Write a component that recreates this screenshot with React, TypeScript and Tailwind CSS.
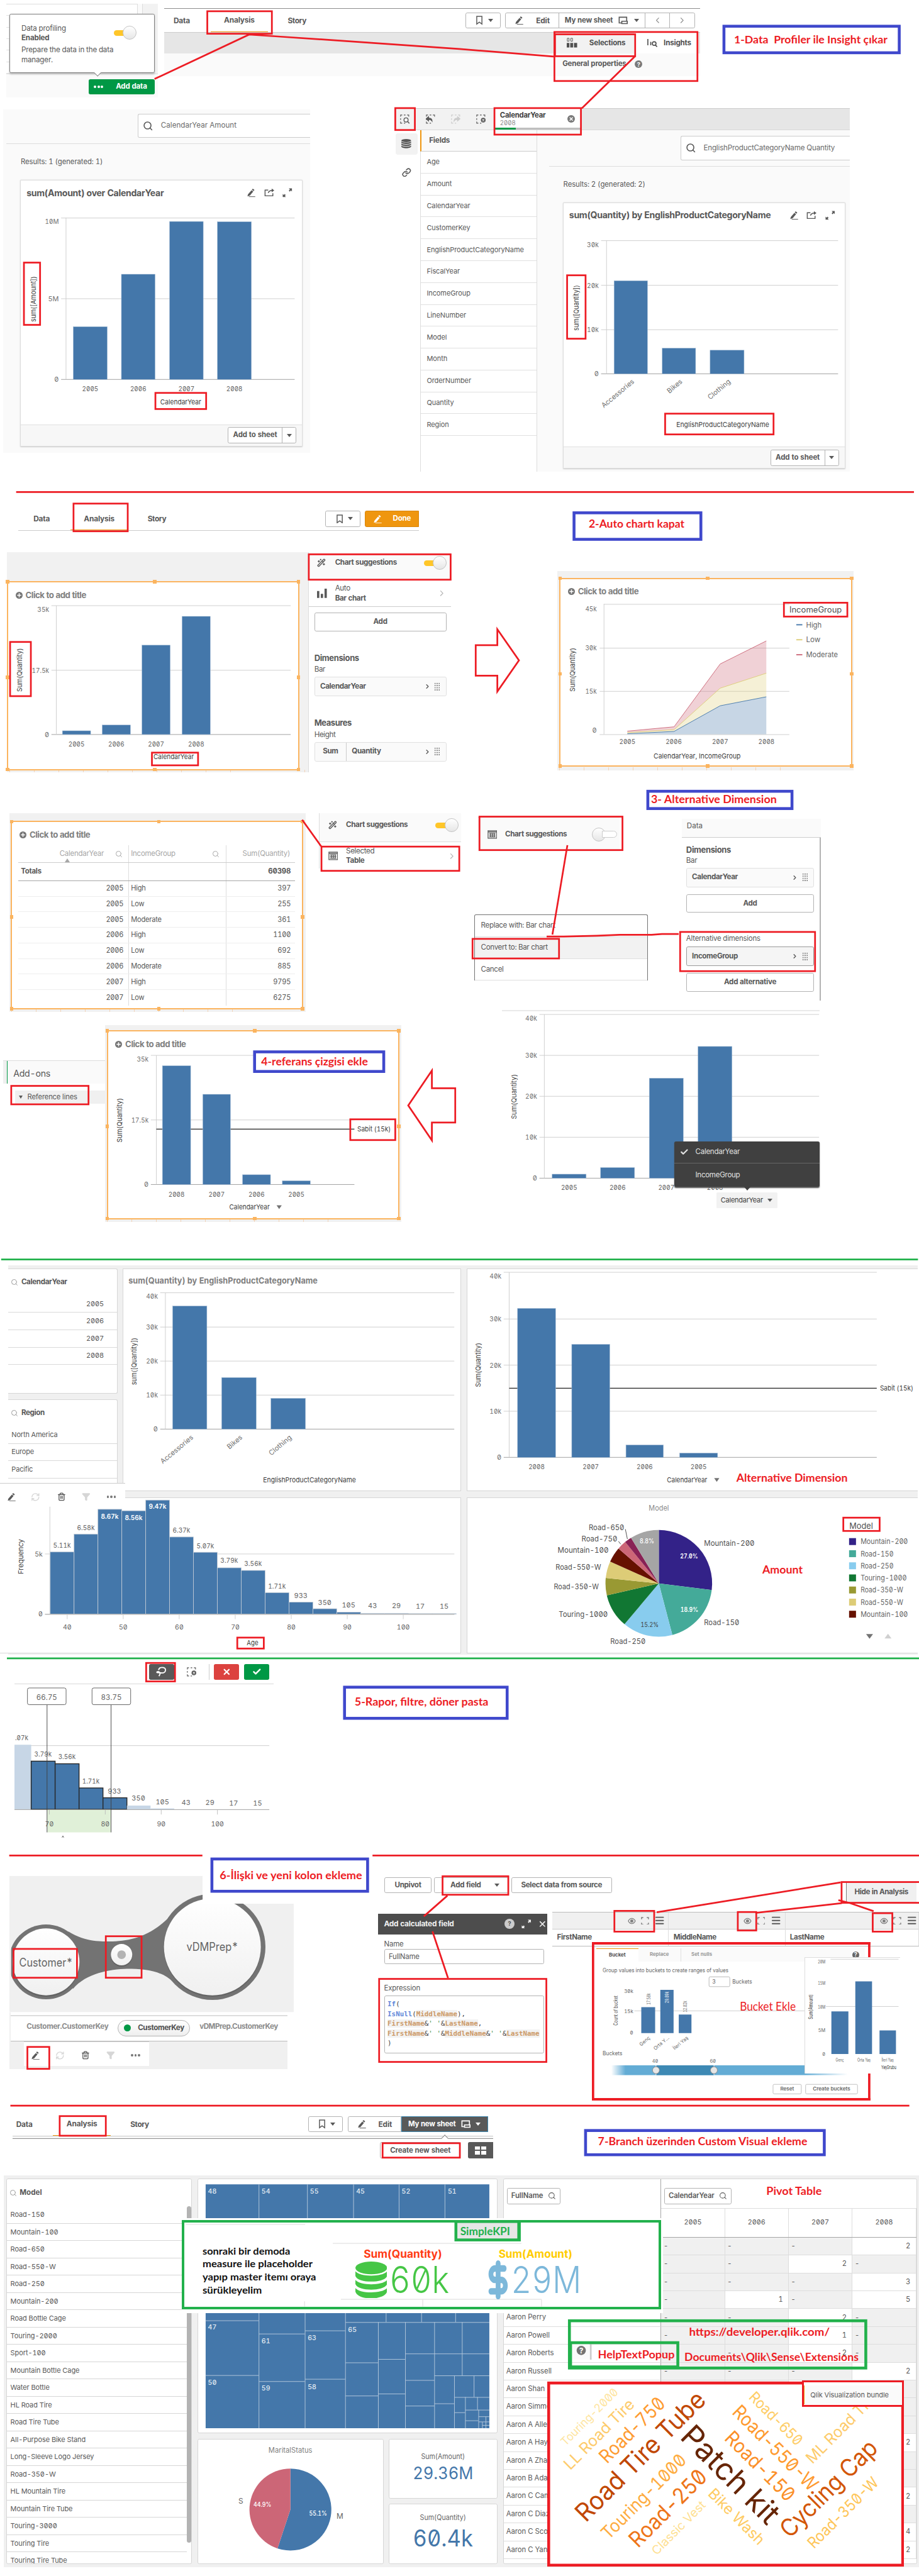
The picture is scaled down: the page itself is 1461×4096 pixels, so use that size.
import React from "react";
import { Search, ChevronLeft, ChevronRight, X, Check, RefreshCw, Trash2, Menu, Link, Wand2, Filter, DollarSign } from "lucide-react";

const BLUE = "#4477aa";
const RED = "#ed1c24";

type Kids = { children?: React.ReactNode };

/* ---------- svg primitives ---------- */

type TxtProps = {
  x: number;
  y: number;
  s?: number;
  w?: number;
  a?: "start" | "middle" | "end";
  f?: string;
  b?: number;
  r?: number;
  children?: React.ReactNode;
};

function Txt({ x, y, s = 11.5, w, a = "middle", f = "#656565", b = 400, r, children }: TxtProps) {
  return (
    <text
      x={x}
      y={y}
      dy=".36em"
      fontSize={s}
      fontWeight={b}
      fill={f}
      textAnchor={a}
      textLength={w}
      lengthAdjust="spacingAndGlyphs"
      transform={r ? `rotate(${r} ${x} ${y})` : undefined}
    >
      {children}
    </text>
  );
}

function Note({ x0, x1, y, s = 19, f = RED, b = 700, children }: { x0: number; x1: number; y: number; s?: number; f?: string; b?: number } & Kids) {
  return (
    <text x={x0} y={y} fontSize={s} fontWeight={b} fill={f} textLength={x1 - x0} lengthAdjust="spacingAndGlyphs" fontFamily="Lato, sans-serif">
      {children}
    </text>
  );
}

function Frame({ b, c = RED, t = 3, fill = "none" }: { b: [number, number, number, number]; c?: string; t?: number; fill?: string }) {
  return <rect x={b[0] + t / 2} y={b[1] + t / 2} width={b[2] - b[0] - t} height={b[3] - b[1] - t} fill={fill} stroke={c} strokeWidth={t} />;
}

function Plot({ box, className = "", children }: { box: [number, number, number, number]; className?: string } & Kids) {
  return (
    <svg className={`block shrink-0 ${className}`} width={box[2]} height={box[3]} viewBox={box.join(" ")}>
      {children}
    </svg>
  );
}

const AXIS_WIDTH: Record<string, number> = { "17.5k": 30, "10M": 24 };

type Bars = {
  gx: [number, number];
  axis: number;
  grid: [number, string, number?][];
  bars: [number, number, number][];
  cats?: string[];
  catY?: number;
  tilt?: boolean;
  refLine?: { y: number; x: number; w: number };
  yt?: [number, number, number, string];
  xt?: [number, number, number, string];
};

function BarPlot({ gx, axis, grid, bars, cats = [], catY = 0, tilt, refLine, yt, xt }: Bars) {
  const base = grid[grid.length - 1][0];
  return (
    <g>
      {grid.map(([y, label, ly], i) => (
        <g key={i}>
          <line x1={gx[0]} x2={gx[1]} y1={y} y2={y} stroke={i === grid.length - 1 ? "#999" : "#ccc"} />
          <Txt x={gx[0] - 4} y={ly ?? y} a="end" s={12} w={AXIS_WIDTH[label] ?? (label.length === 3 ? 20.5 : undefined)} f="#737373">{label}</Txt>
        </g>
      ))}
      <line x1={axis} x2={axis} y1={grid[0][0]} y2={base} stroke="#ccc" />
      {refLine && <line x1={axis} x2={gx[1]} y1={refLine.y} y2={refLine.y} stroke="#222" strokeWidth={1.3} />}
      {refLine && <Txt x={refLine.x} y={refLine.y} a="start" s={12} w={refLine.w} f="#404040">Sabit (15k)</Txt>}
      {bars.map(([a, b, top], i) => (
        <g key={i}>
          <rect x={a} y={top} width={b - a} height={base - top} fill={BLUE} stroke="#a9c0d8" strokeWidth={0.6} />
          {cats[i] && !tilt && <Txt x={(a + b) / 2} y={catY} s={12} w={28} f="#666">{cats[i]}</Txt>}
          {cats[i] && tilt && <Txt x={(a + b) / 2 + 4} y={catY} a="end" s={12} r={-40} f="#737373">{cats[i]}</Txt>}
        </g>
      ))}
      {yt && <Txt x={yt[0]} y={yt[1]} w={yt[2]} r={-90} s={12} f="#404040">{yt[3]}</Txt>}
      {xt && <Txt x={xt[0]} y={xt[1]} w={xt[2]} s={12} f="#404040">{xt[3]}</Txt>}
    </g>
  );
}

function slice(cx: number, cy: number, r: number, a0: number, a1: number) {
  const p = (a: number) => `${cx + r * Math.sin((a * Math.PI) / 180)} ${cy - r * Math.cos((a * Math.PI) / 180)}`;
  return `M${cx} ${cy}L${p(a0)}A${r} ${r} 0 ${a1 - a0 > 180 ? 1 : 0} 1 ${p(a1)}Z`;
}

/* ---------- icons ---------- */

function PencilIcon({ className = "size-4" }: { className?: string }) {
  return (
    <svg viewBox="0 0 16 16" className={className} fill="currentColor">
      <path d="M10.7 1.2l3 2.2-1.5 1.9-3-2.3zM8.6 3.8l3 2.2-5.9 7.2-4.2 1.4.9-3.7z" />
      <path d="M4 14.4h11v1.1H4z" />
    </svg>
  );
}
function BookmarkIcon() {
  return (
    <svg viewBox="0 0 11 16" className="h-4 w-[11px]" fill="none" stroke="currentColor" strokeWidth="1.6">
      <path d="M1 1h9v13.5l-4.500-3.500L1 14.500z" />
    </svg>
  );
}
function ShareIcon() {
  return (
    <svg viewBox="0 0 18 16" className="h-4 w-[18px]" fill="none" stroke="currentColor" strokeWidth="1.6">
      <path d="M7 3.5H1.5v10h13.500V9M7 8.500c1-3.500 3.500-4.500 7-4.500" />
      <path d="M13 .8L17.500 4 13 7.300z" fill="currentColor" stroke="none" />
    </svg>
  );
}
function ExpandIcon() {
  return (
    <svg viewBox="0 0 17 16" className="h-4 w-[17px]" fill="currentColor">
      <path d="M11 .5h5.500v5.500l-1.800-1.800-2 2-1.700-1.700 2-2zM.5 15.500h5.500l-1.800-1.800 1.500-1.500-1.700-1.700-1.600 1.600L.5 10.300z" />
    </svg>
  );
}
function SheetIcon() {
  return (
    <svg viewBox="0 0 17 14" className="h-[14px] w-[17px]" fill="none" stroke="currentColor" strokeWidth="1.800">
      <path d="M5.500 11.500H1.500V1.500h13v6.500" />
      <path d="M6 12.500v-4h9.500v4z" />
    </svg>
  );
}
function Caret({ className = "border-t-[#595959]" }: { className?: string }) {
  return <i className={`block h-0 w-0 border-x-[5px] border-t-[6px] border-x-transparent ${className}`} />;
}
function Help({ className = "size-[13px] bg-[#7a7a7a] text-white" }: { className?: string }) {
  return <i className={`flex items-center justify-center rounded-full text-[10px] font-bold not-italic leading-none ${className}`}>?</i>;
}
function Dashed({ kind, className = "" }: { kind: "find" | "back" | "next" | "clear"; className?: string }) {
  return (
    <svg viewBox="0 0 18 18" className={`size-[17px] ${className}`} fill="none" stroke="currentColor" strokeWidth="1.300">
      <path d="M1 4V1h3M7 1h3M13 1h3v3M1 7v3M1 13v3h3M7 16h2.500" />
      {kind === "find" && <><circle cx="11" cy="10" r="3.800" strokeWidth="1.600" /><path d="M14 13l3 3.500" strokeWidth="1.800" /></>}
      {kind === "back" && <path d="M5 4L.5 8 5 12V9.300c4 0 5 .7 6.500 3.200 0-4-2-5.800-6.500-6z" fill="currentColor" />}
      {kind === "next" && <path d="M12 4l4.500 4-4.500 4V9.300c-4 0-5 .7-6.500 3.200 0-4 2-5.800 6.500-6z" fill="currentColor" />}
      {kind === "clear" && <><circle cx="13" cy="10.500" r="4.300" fill="currentColor" stroke="none" /><path d="M11.300 8.800l3.400 3.400m0-3.400l-3.400 3.400" stroke="#fff" /></>}
    </svg>
  );
}
function LassoIcon() {
  return (
    <svg viewBox="0 0 18 18" className="size-[18px]" fill="none" stroke="#fff" strokeWidth="2">
      <path d="M4.500 6C5 3 7.500 1.500 10.500 1.500c3.500 0 6 1.800 6 4.500s-2.500 5-6 5c-3 0-5.500-1-8-.5-1.500.3-1.500-2 1-2 2.500.2 3.500 1.500 3.500 3.500 0 1.800-.8 3-2 4.500" />
    </svg>
  );
}
function Database({ className = "" }: { className?: string }) {
  return (
    <svg viewBox="0 0 54 64" preserveAspectRatio="none" className={className} fill="currentColor">
      <ellipse cx="27" cy="11" rx="27" ry="11" />
      <path d="M0 17c8 10 46 10 54 0v8c-4 13-50 13-54 0zM0 32c8 10 46 10 54 0v7c-4 13-50 13-54 0zM0 46c8 10 46 10 54 0v6c-4 16-50 16-54 0z" />
    </svg>
  );
}
function Toggle({ off }: { off?: boolean }) {
  const knob = "size-6 shrink-0 rounded-full border border-[#c4c4c4] bg-gradient-to-b from-white to-[#e6e6e6]";
  return off ? (
    <div className="flex items-center">
      <div className={knob} />
      <div className="-ml-1.5 h-3 w-[26px] rounded-r-full border border-[#ccc] bg-white" />
    </div>
  ) : (
    <div className="flex items-center">
      <div className="-mr-3 h-[10px] w-7 rounded-full bg-[#ffc629]" />
      <div className={knob} />
    </div>
  );
}
function GridDots() {
  return <i className="block h-[15px] w-[11px] bg-[radial-gradient(circle,#777_0.9px,transparent_1.2px)] bg-[length:3.6px_3.75px]" />;
}
function TableIcon() {
  return (
    <svg viewBox="0 0 17 15" className="h-[15px] w-[17px]" fill="none" stroke="#595959" strokeWidth="1.400">
      <path d="M1 1h15v13H1zM1 3h15M5 5v7M8.500 5v7M12 5v7M3 5.500h11M3 8.500h11M3 11.500h11" />
    </svg>
  );
}
function BarsIcon() {
  return (
    <svg viewBox="0 0 17 16" className="h-4 w-[17px]" fill="#595959">
      <path d="M0 4h4v12H0zM6.500 9h4v7h-4zM13 0h4v16h-4z" />
    </svg>
  );
}

/* ---------- shared interface pieces ---------- */

const btn = "flex items-center justify-center border border-[#b3b3b3] bg-white";

function Tabs({ className = "", children }: { className?: string } & Kids) {
  return (
    <div className={`flex text-[13px] font-bold tracking-[-0.2px] text-[#595959] ${className}`}>
      <div className="flex w-16 items-center">Data</div>
      <div className="flex w-[100px] items-center justify-center border-b-2 border-[#ef960f]">Analysis</div>
      <div className="flex items-center pl-[34px] tracking-[-0.4px]">Story</div>
      <div className="ml-auto flex items-center text-[13px]">{children}</div>
    </div>
  );
}

function BookmarkButton() {
  return (
    <div className={`${btn} mr-2 h-7 w-[61px] gap-[9px] rounded-[3px] pl-[6px]`}>
      <BookmarkIcon />
      <Caret />
    </div>
  );
}

function AddToSheet() {
  return (
    <div className="flex h-[37px] items-center justify-end border-t border-[#e0e0e0] bg-[#f7f7f7] pr-[10px]">
      <div className="flex h-7 w-[119px] rounded-[3px] border border-[#b3b3b3] bg-white">
        <div className="flex flex-1 items-center justify-center text-[12.5px] font-bold tracking-[-0.1px]">Add to sheet</div>
        <div className="flex w-6 items-center justify-center border-l border-[#b3b3b3]"><Caret /></div>
      </div>
    </div>
  );
}

function SearchBox({ className, children }: { className: string } & Kids) {
  return (
    <div className={`ml-auto flex h-[42px] shrink-0 items-center rounded-l-[3px] border border-r-0 border-[#ccc] bg-white pl-2 text-[12.7px] text-[#6b6b6b] ${className}`}>
      <Search className="mr-[13px] size-[18px] text-[#595959]" strokeWidth={2.3} />
      {children}
    </div>
  );
}

function InsightCard({ title, className, children }: { title: string; className: string } & Kids) {
  return (
    <div className={`flex h-[462px] w-[490px] flex-col rounded-[2px] border border-[#ddd] bg-white shadow-[0_1px_2px_#ccc] ${className}`}>
      <div className="flex h-[43px] shrink-0 items-center pl-[10px] pr-[17px]">
        <span className="text-[15.4px] font-bold tracking-[-0.35px]">{title}</span>
        <span className="ml-auto flex gap-[14px] text-[#595959]"><PencilIcon /><ShareIcon /><ExpandIcon /></span>
      </div>
      {children}
      <AddToSheet />
    </div>
  );
}

/** A chart object selected in edit mode: grid backdrop, orange outline and eight drag handles. */
function Selected({ className, inner, children }: { className: string; inner: string } & Kids) {
  const h = "absolute size-[6px] bg-[#fbb45f]";
  return (
    <div className={`absolute bg-[#f1f1f1] ${className}`}>
      <div className="absolute inset-x-1 bottom-0 h-[5px] bg-[repeating-linear-gradient(90deg,#f3d3b6_0_1px,transparent_1px_42.6px)]" />
      <div className={`absolute border-[2.5px] border-[#fbb45f] bg-white ${inner}`}>
        <div className="flex h-11 items-center gap-[5px] pl-[13px] text-[14.5px] font-bold tracking-[-0.55px] text-[#808080]">
          <svg viewBox="0 0 12 12" className="size-3"><circle cx="6" cy="6" r="6" fill="#757575" /><path d="M6 2.500v7M2.500 6h7" stroke="#fff" strokeWidth="1.600" /></svg>
          Click to add title
        </div>
        {children}
        <i className={`${h} -left-1 -top-1`} /><i className={`${h} -right-1 -top-1`} /><i className={`${h} left-1/2 -top-1`} />
        <i className={`${h} -bottom-1 -left-1`} /><i className={`${h} -bottom-1 -right-1`} /><i className={`${h} -bottom-1 left-1/2`} />
        <i className={`${h} -left-1 top-1/2`} /><i className={`${h} -right-1 top-1/2`} />
      </div>
    </div>
  );
}

function Suggest({ icon, off, className = "" }: { icon: React.ReactNode; off?: boolean; className?: string }) {
  return (
    <div className={`flex items-center bg-[#fafafa] text-[12.7px] font-bold tracking-[-0.45px] ${className}`}>
      <span className="w-[31px]">{icon}</span>
      Chart suggestions
      <span className="ml-auto"><Toggle off={off} /></span>
    </div>
  );
}

function Chip({ label, pre, className = "border-[#e0e0e0] bg-[#fafafa]" }: { label: string; pre?: string; className?: string }) {
  return (
    <div className={`flex h-[34px] items-center rounded-[3px] border pr-[9px] text-[12.7px] font-bold tracking-[-0.4px] ${className}`}>
      {pre && <span className="flex h-full w-[55px] items-center justify-center border-r border-[#ccc]">{pre}</span>}
      <span className="pl-[9px]">{label}</span>
      <ChevronRight className="ml-auto mr-[6px] size-3" strokeWidth={3} />
      <GridDots />
    </div>
  );
}

function WideButton({ children }: Kids) {
  return <div className={`${btn} h-8 rounded-[3px] text-[12.7px] font-bold tracking-[-0.3px]`}>{children}</div>;
}

function ObjectTools() {
  return (
    <div className="flex h-[46px] items-center text-[#595959]">
      <PencilIcon className="mr-[26px] size-4" />
      <RefreshCw className="mr-[29px] size-4 text-[#d6d6d6]" strokeWidth={2.2} />
      <Trash2 className="mr-[28px] size-[15px]" strokeWidth={2.4} />
      <Filter className="mr-[28px] size-[15px] text-[#d6d6d6]" fill="currentColor" />
      <span className="flex gap-[2px]"><i className="size-1 rounded-full bg-[#777]" /><i className="size-1 rounded-full bg-[#777]" /><i className="size-1 rounded-full bg-[#777]" /></span>
    </div>
  );
}

/* ---------- 1: data profiler and insights ---------- */

const FIELDS = ["Age", "Amount", "CalendarYear", "CustomerKey", "EnglishProductCategoryName", "FiscalYear", "IncomeGroup", "LineNumber", "Model", "Month", "OrderNumber", "Quantity", "Region"];

function Profiler() {
  return (
    <section>
      <div className="absolute left-[11px] top-[7px] h-[162px] w-[263px] bg-[#fafafa]">
        <div className="flex h-[122px] justify-between border-b border-[#ddd]">
          <div className="w-[228px] border-r border-t border-[#ddd] bg-[repeating-linear-gradient(0deg,#e3e3e3_0_1px,#fff_1px_20px)]" />
          <div className="w-[27px] border-l border-[#ddd] bg-[#f2f2f2]" />
        </div>
        <div className="absolute left-[5px] top-[17px] flex h-[103px] w-[252px] rounded-[3px] border border-[#808080] bg-white pl-5 pt-4 shadow-[0_2px_3px_#bbb]">
          <div className="w-[160px] text-[12.7px] leading-[17px] tracking-[-0.2px]">
            <p>Data profiling</p>
            <p className="mb-1 font-bold">Enabled</p>
            <p className="whitespace-nowrap">Prepare the data in the data</p>
            <p>manager.</p>
          </div>
          <div className="pt-1"><Toggle /></div>
        </div>
        <i className="absolute left-[154px] top-[115px] size-[9px] rotate-45 border-b border-r border-[#808080] bg-white" />
        <div className="absolute left-[143px] top-[130px] flex h-[27px] w-[114px] items-center gap-[22px] rounded-[3px] bg-[#009845] pl-[9px] text-[12.6px] font-bold tracking-[-0.2px] text-white">
          <span className="flex gap-[2px]"><i className="size-1 rounded-full bg-white" /><i className="size-1 rounded-full bg-white" /><i className="size-1 rounded-full bg-white" /></span>
          Add data
        </div>
      </div>

      <div className="absolute left-[285px] top-[14px] flex h-[118px] w-[929px] flex-col bg-[#fafafa]">
        <Tabs className="h-[43px] border-b border-t border-b-[#ccc] border-t-[#8c8c8c] bg-white pl-4 pr-[9px]">
          <BookmarkButton />
          <div className={`${btn} h-7 w-[94px] gap-[21px] rounded-l-[3px]`}><PencilIcon />Edit</div>
          <div className={`${btn} -ml-px h-7 w-[150px] gap-[10px] text-[12.5px]`}>My new sheet<SheetIcon /><Caret /></div>
          <div className={`${btn} -ml-px h-7 w-11`}><ChevronLeft className="size-4 text-[#8c8c8c]" /></div>
          <div className={`${btn} -ml-px h-7 w-11 rounded-r-[3px]`}><ChevronRight className="size-4 text-[#8c8c8c]" /></div>
        </Tabs>
        <div className="flex h-[36px] justify-end bg-[#e6e6e6] pr-[3px] text-[12.6px] font-bold tracking-[-0.2px] text-[#505050]">
          <div className="flex w-[136px] items-center bg-[#f2f2f2] pl-[19px]">
            <svg viewBox="0 0 18 18" className="mr-[21px] size-[18px]" fill="#505050"><path d="M1 1h3v5H1zM7 1h3v5H7z" fill="none" stroke="#505050" /><path d="M0 9h4.500v8H0zM6 9h5v8H6zM12.500 9H18v8h-5.500z" /></svg>
            Selections
          </div>
          <div className="flex w-[111px] items-center gap-[11px] bg-white pl-[22px]">
            <svg viewBox="0 0 18 14" className="h-[14px] w-[18px]" fill="none" stroke="#505050" strokeWidth="1.800"><path d="M1 0v11M6 5v6" /><circle cx="12" cy="8" r="3.200" /><path d="M14 10.500l3 3" /></svg>
            Insights
          </div>
        </div>
        <div className="flex flex-1 items-center justify-end gap-[15px] pb-0.5 pr-[100px] text-[12.5px] font-bold tracking-[-0.2px]">General properties<Help /></div>
      </div>

      <div className="absolute left-[5px] top-[190px] flex h-[595px] w-[533px] flex-col bg-[#fafafa]">
        <div className="ml-[6px] flex h-[60px] border-b border-[#ddd] pt-[7px]"><SearchBox className="w-[299px]">CalendarYear Amount</SearchBox></div>
        <p className="flex h-[62px] items-center pl-[31px] text-[12.4px] tracking-[-0.1px]">Results: 1 (generated: 1)</p>
        <InsightCard title="sum(Amount) over CalendarYear" className="ml-[30px]">
          <Plot box={[36, 355, 488, 380]}>
            <BarPlot gx={[106, 511]} axis={114.5} grid={[[377.5, "10M", 383.5], [517.5, "5M"], [657.5, "0"]]} bars={[[127, 186, 566], [210.5, 269, 475], [294, 352.5, 383.5], [377, 436, 384]]} cats={["2005", "2006", "2007", "2008"]} catY={674} yt={[57.5, 518, 79, "sum([Amount])"]} xt={[313.5, 696, 71, "CalendarYear"]} />
          </Plot>
        </InsightCard>
      </div>

      <div className="absolute left-[686px] top-[188px] flex h-[630px] w-[788px] flex-col">
        <div className="flex h-[38px] items-center border-y border-b-[#d9d9d9] border-t-[#ccc] bg-[#e6e6e6]">
          <div className="flex h-full w-[172px] items-center gap-[27px] bg-[#f2f2f2] pl-2">
            <Dashed kind="find" /><Dashed kind="back" /><Dashed kind="next" className="text-[#ccc]" /><Dashed kind="clear" />
          </div>
          <div className="flex h-full w-[150px] flex-col justify-between bg-white">
            <div className="flex items-center justify-between pl-[9px] pr-[11px] pt-[5px]">
              <div><p className="text-[12.3px] font-bold leading-[13px] tracking-[-0.2px] text-[#404040]">CalendarYear</p><p className="text-[10.5px] leading-3 text-[#8c8c8c]">2008</p></div>
              <i className="flex size-[13px] items-center justify-center rounded-full bg-[#7a7a7a]"><X className="size-[9px] text-white" strokeWidth={4} /></i>
            </div>
            <div className="flex h-1 bg-[#bfbfbf]"><i className="w-[36px] bg-[#009845]" /></div>
          </div>
        </div>
        <div className="flex flex-1">
          <div className="flex w-[43px] flex-col items-center gap-[23px] pr-[5px] pt-[5px]">
            <div className="flex h-[37px] w-[38px] items-center justify-center rounded bg-[#f2f2f2]"><Database className="h-4 w-[17px]" /></div>
            <Link className="size-4" strokeWidth={2.6} />
          </div>
          <div className="flex w-[203px] flex-col border-r border-[#ddd]">
            <div className="flex h-[37px] items-center border-b border-l-[3px] border-b-[#ccc] border-l-[#ef960f] bg-[#fafafa] pl-[13px] text-[12.8px] font-bold tracking-[-0.2px]">Fields</div>
            <div className="flex-1 border-l border-[#ddd]">
              {FIELDS.map((f) => <div key={f} className="flex h-[37.95px] items-center border-b border-[#e0e0e0] pl-[10px] text-[12px] tracking-[-0.1px]">{f}</div>)}
            </div>
          </div>
          <div className="flex flex-1 flex-col bg-[#fafafa]">
            <div className="ml-5 flex h-[63px] border-b border-[#ddd] pt-[10px]"><SearchBox className="w-[294px] tracking-[-0.2px]">EnglishProductCategoryName Quantity</SearchBox></div>
            <p className="flex h-[62px] items-center pl-[45px] text-[12.4px] tracking-[-0.1px]">Results: 2 (generated: 2)</p>
            <InsightCard title="sum(Quantity) by EnglishProductCategoryName" className="ml-[44px]">
              <Plot box={[977, 394, 488, 380]}>
                <BarPlot gx={[1042, 1453]} axis={1051.5} grid={[[416.5, "30k", 423], [494, "20k"], [571, "10k"], [647.5, "0"]]} bars={[[1064.5, 1122.5, 486], [1148, 1206, 603], [1231, 1290, 606.5]]} cats={["Accessories", "Bikes", "Clothing"]} catY={659} tilt yt={[998.5, 533, 79, "sum([Quantity])"]} xt={[1253, 735, 161, "EnglishProductCategoryName"]} />
              </Plot>
            </InsightCard>
          </div>
        </div>
      </div>
    </section>
  );
}

/* ---------- 2 to 4: chart suggestions, alternative dimensions, reference line ---------- */

const ROWS: [string, string, string][] = [["2005", "High", "397"], ["2005", "Low", "255"], ["2005", "Moderate", "361"], ["2006", "High", "1100"], ["2006", "Low", "692"], ["2006", "Moderate", "885"], ["2007", "High", "9795"], ["2007", "Low", "6275"]];

function Suggestions() {
  return (
    <section>
      <Tabs className="absolute left-8 top-[880px] h-[41px] w-[695px] border-b border-[#ccc] pl-[26px]">
        <BookmarkButton />
        <div className="flex h-[29px] w-[94px] items-center justify-center gap-[18px] rounded-l-[3px] border border-b-2 border-[#d9860b] bg-[#ef960f] text-[12.6px] text-white"><PencilIcon />Done</div>
      </Tabs>

      <Selected className="left-3 top-[958px] h-[382px] w-[523px]" inner="left-0 top-[50px] h-[328px] w-[507px]">
        <Plot box={[15, 1046, 500, 284]} className="-mt-[9px]">
          <BarPlot gx={[90, 505]} axis={98.5} grid={[[1051.5, "35k", 1058], [1163.5, "17.5k"], [1275, "0"]]} bars={[[109, 158, 1268.5], [178, 227, 1258.5], [247, 296, 1120], [316.5, 365.5, 1070]]} cats={["2005", "2006", "2007", "2008"]} catY={1291} yt={[34.5, 1163, 76, "Sum(Quantity)"]} xt={[302, 1313, 70, "CalendarYear"]} />
        </Plot>
      </Selected>

      <div className="absolute left-[535px] top-[958px] flex h-[382px] w-[247px] flex-col border-l border-[#ddd]">
        <Suggest className="h-[49px] pb-3 pl-[14px] pr-[7px]" icon={<Wand2 className="size-[15px]" strokeWidth={2.5} />} />
        <div className="flex h-[46px] items-center border-b border-[#ccc] pl-[14px] pr-2">
          <BarsIcon />
          <div className="ml-[14px] text-[12.7px] leading-[17px] tracking-[-0.4px]"><p>Auto</p><p className="font-bold">Bar chart</p></div>
          <ChevronRight className="ml-auto size-4 text-[#b3b3b3]" />
        </div>
        <div className="flex flex-col pl-[9px] pr-[8px] pt-[10px]">
          <WideButton>Add</WideButton>
          <p className="mt-[37px] text-[14.2px] font-bold leading-[18px] tracking-[-0.4px]">Dimensions</p>
          <p className="mb-[4px] mt-[2px] text-[12.7px] leading-[18px] tracking-[-0.4px]">Bar</p>
          <Chip label="CalendarYear" />
          <p className="mt-[37px] text-[14.2px] font-bold leading-[18px] tracking-[-0.5px]">Measures</p>
          <p className="mb-[4px] mt-[2px] text-[12.7px] leading-[18px] tracking-[-0.4px]">Height</p>
          <Chip pre="Sum" label="Quantity" />
        </div>
      </div>

      <Selected className="left-[966px] top-[990px] h-[346px] w-[514px]" inner="left-[4px] top-[12px] h-[328px] w-[508px]">
        <Plot box={[973, 1040, 502, 285]} className="-mt-2">
          {([[1047.5, 1055.5, "45k"], [1123.5, 1123.5, "30k"], [1198.5, 1198.5, "15k"], [1273.5, 1266, "0"]] as [number, number, string][]).map(([y, ly, t], i) => (
            <g key={i}><line x1={i ? 1041 : 1048} x2={1370} y1={y} y2={y} stroke="#ccc" /><Txt x={1036} y={ly} a="end" s={12} w={t.length > 1 ? 20 : undefined} f="#737373">{t}</Txt></g>
          ))}
          <line x1={1048.5} x2={1048.5} y1={1047} y2={1273} stroke="#ccc" />
          <path d="M1089 1267.500L1170 1260 1250 1151 1330 1111V1167L1250 1193 1170 1265 1089 1270z" fill="#cc6677" fillOpacity=".3" />
          <path d="M1089 1270L1170 1265 1250 1193 1330 1167V1208L1250 1223.500 1170 1268 1089 1272z" fill="#ddcc77" fillOpacity=".3" />
          <path d="M1089 1272L1170 1268 1250 1223.500 1330 1208V1273H1089z" fill={BLUE} fillOpacity=".3" />
          <g fill="none"><path d="M1089 1267.500L1170 1260 1250 1151 1330 1111" stroke="#cc6677" /><path d="M1089 1270L1170 1265 1250 1193 1330 1167" stroke="#ddcc77" /><path d="M1089 1272L1170 1268 1250 1223.500 1330 1208" stroke={BLUE} /></g>
          {["2005", "2006", "2007", "2008"].map((t, i) => <Txt key={t} x={1089 + i * 80.4} y={1286} s={12} w={28}>{t}</Txt>)}
          <Txt x={1210} y={1311} s={12} w={151} f="#404040">CalendarYear, IncomeGroup</Txt>
          <Txt x={994} y={1161} s={12} w={76} r={-90} f="#404040">Sum(Quantity)</Txt>
          <Txt x={1370} y={1057} s={14} w={91} a="start" f="#505050">IncomeGroup</Txt>
          {([["High", "#4477aa", 27], ["Low", "#ddcc77", 25], ["Moderate", "#cc6677", 55]] as [string, string, number][]).map(([t, c, w], i) => (
            <g key={i}><path d={`M1382 ${1083 + i * 26}h10.500`} stroke={c} strokeWidth={2} /><Txt x={1399} y={1083 + i * 26} a="start" s={12.5} w={w}>{t}</Txt></g>
          ))}
        </Plot>
      </Selected>

      <Selected className="left-4 top-[1411px] h-[344px] w-[514px]" inner="left-[3px] top-[13px] h-[327px] w-[507px]">
        <div className="ml-[10px] mt-[-4px] w-[481px] text-[12.1px] tracking-[-0.25px]">
          <div className="grid h-[31px] grid-cols-[193px_169px_119px] border-b border-[#ccc] text-[12.5px] text-[#a6a6a6]">
            <div className="relative flex items-center justify-end gap-[19px] border-r border-[#ddd] pr-[11px]">CalendarYear<Search className="size-[13px]" /><i className="absolute bottom-px left-[81px] border-x-[5px] border-b-[7px] border-x-transparent border-b-[#a6a6a6]" /></div>
            <div className="flex items-center justify-between border-r border-[#ddd] pl-[3px] pr-[11px]">IncomeGroup<Search className="size-[13px]" /></div>
            <div className="flex items-center justify-end pr-[9px]">Sum(Quantity)</div>
          </div>
          <div className="grid h-[31px] grid-cols-[193px_169px_119px] border-b-2 border-[#a6a6a6] text-[12.5px] font-bold">
            <div className="flex items-center border-r border-[#ddd] pl-[5px]">Totals</div><div className="border-r border-[#ddd]" /><div className="flex items-center justify-end pr-[8px]">60398</div>
          </div>
          {ROWS.map((r, i) => (
            <div key={i} className="grid h-[27px] grid-cols-[193px_169px_119px] border-b border-[#eee] last:border-0">
              <div className="flex items-center justify-end border-r border-[#ddd] pr-[9px]">{r[0]}</div>
              <div className="flex items-center border-r border-[#ddd] pl-[3px]">{r[1]}</div>
              <div className="flex items-center justify-end pr-[8px]">{r[2]}</div>
            </div>
          ))}
        </div>
      </Selected>

      <div className="absolute left-[553px] top-[1411px] h-[95px] w-[247px] border-l border-[#ddd]">
        <Suggest className="h-[50px] border-b border-[#ddd] pb-2 pl-[15px] pr-[5px]" icon={<Wand2 className="size-[15px]" strokeWidth={2.5} />} />
        <div className="flex h-[48px] items-center pl-[15px] pr-[8px]">
          <TableIcon />
          <div className="ml-[14px] text-[12.7px] leading-[17px] tracking-[-0.4px]"><p>Selected</p><p className="font-bold">Table</p></div>
          <ChevronRight className="ml-auto size-4 text-[#b3b3b3]" />
        </div>
      </div>

      <Suggest off className="absolute left-[829px] top-[1417px] h-[60px] w-[246px] border-t border-[#ccc] pl-4 pr-[5px]" icon={<TableIcon />} />

      <div className="absolute left-[822px] top-[1586px] w-[302px] rounded-t-[3px] border border-b-0 border-[#737373] bg-white text-[12.6px] tracking-[-0.35px]">
        <div className="flex h-[38px] items-center border-b border-[#e0e0e0] pl-[11px]">Replace with: Bar chart</div>
        <div className="flex h-[38px] items-center border-b border-[#e0e0e0] bg-[#f2f2f2] pl-[11px]">Convert to: Bar chart</div>
        <div className="flex h-[38px] items-center border-b border-[#ddd] pl-[11px]">Cancel</div>
      </div>

      <div className="absolute left-[1182px] top-[1420px] flex h-[316px] w-[242px] flex-col">
        <div className="flex h-[33px] items-center border-b border-[#ccc] bg-[#fafafa] pb-1.5 pl-[9px] text-[12.7px]">Data</div>
        <div className="flex flex-1 flex-col border-r-[2.5px] border-[#b3b3b3] pl-2 pr-[10px] pt-3">
          <p className="text-[14.2px] font-bold leading-[18px] tracking-[-0.4px]">Dimensions</p>
          <p className="mb-[3px] mt-[1px] text-[12.7px] leading-[18px] tracking-[-0.4px]">Bar</p>
          <Chip label="CalendarYear" />
          <div className="mt-3"><WideButton>Add</WideButton></div>
          <p className="mb-[5px] mt-9 text-[12.5px] leading-[18px] tracking-[-0.25px]">Alternative dimensions</p>
          <Chip label="IncomeGroup" className="border-[#999] bg-[#f5f5f5]" />
          <div className="mt-3"><WideButton>Add alternative</WideButton></div>
        </div>
      </div>

      <div className="absolute left-[871px] top-[1752px] h-[345px] w-[550px] border-t-[3px] border-[#e9e9e9]">
        <Plot box={[871, 1755, 550, 341]}>
          <BarPlot gx={[936, 1421]} axis={944.5} grid={[[1760.5, "40k", 1767], [1831.5, "30k"], [1902.5, "20k"], [1973.5, "10k"], [2044.5, "0"]]} bars={[[958, 1017, 2037.5], [1042, 1101, 2026], [1126.5, 1185.5, 1871], [1211, 1270, 1816]]} cats={["2005", "2006", "2007", "2008"]} catY={2061} yt={[892, 1903, 78, "Sum(Quantity)"]} />
        </Plot>
        <div className="absolute left-[298px] top-[226px] w-[252px] rounded-[3px] bg-[#404040] text-[12.6px] tracking-[-0.3px] text-[#e0e0e0] shadow-[0_2px_2px_#555]">
          <div className="flex h-[38px] items-center border-b border-[#666] pl-[10px]"><Check className="mr-[12px] size-[15px]" strokeWidth={4} />CalendarYear</div>
          <div className="flex h-[40px] items-center pl-[37px]">IncomeGroup</div>
          <i className="absolute -bottom-[7px] left-[120px] border-x-[7px] border-t-[8px] border-x-transparent border-t-[#404040]" />
        </div>
        <div className="absolute left-[371px] top-[314px] flex h-[27px] w-[106px] items-center justify-between rounded-[2px] bg-[#f2f2f2] px-2 text-[12px] tracking-[-0.3px] text-[#404040]">CalendarYear<Caret /></div>
      </div>

      <div className="absolute left-[5px] top-[1839px] h-[77px] w-[177px]">
        <div className="flex h-[41px] border-t border-[#ddd] bg-[#fafafa]"><div className="w-[7px] bg-[#efefef]" /><div className="flex items-center border-l-2 border-[#009845] pl-[10px] pt-1 text-[15.5px] tracking-[-0.3px]">Add-ons</div></div>
        <div className="ml-[21px] mt-3 flex h-[23px] items-center gap-2 bg-[#f0f0f0] pl-[7px] text-[12.3px] tracking-[-0.2px]"><i className="border-x-4 border-t-[6px] border-x-transparent border-t-[#595959]" />Reference lines</div>
      </div>

      <Selected className="left-[182px] top-[1778px] h-[342px] w-[514px]" inner="left-[3px] top-[9px] h-[328px] w-[508px]">
        <Plot box={[188, 1826, 502, 284]} className="-mt-[7.5px]">
          <BarPlot gx={[262, 615]} axis={271.5} grid={[[1830.5, "35k", 1837], [1942.5, "17.5k"], [2054.5, "0"]]} bars={[[282, 331, 1848.5], [352, 400, 1898], [421, 469.5, 2037.5], [490, 538.5, 2048]]} cats={["2008", "2007", "2006", "2005"]} catY={2071} refLine={{ y: 1958.5, x: 620, w: 58 }} yt={[208, 1943, 77, "Sum(Quantity)"]} xt={[433, 2093, 70, "CalendarYear"]} />
          <path d="M480 2090.500h9l-4.500 6.500z" fill="#737373" />
        </Plot>
      </Selected>
    </section>
  );
}

/* ---------- dashboard ---------- */

const HIST: [string, number, number][] = [["5.11k", 2691.5, 2680], ["6.58k", 2660.5, 2649], ["8.67k", 2617.5, 2629.5], ["8.56k", 2620, 2631.5], ["9.47k", 2601.5, 2612.5], ["6.37k", 2665.5, 2654], ["5.07k", 2692, 2680.5], ["3.79k", 2719, 2706.5], ["3.56k", 2723.5, 2712], ["1.71k", 2762, 2750.5], ["933", 2778.5, 2767], ["350", 2790, 2779], ["105", 2796, 2784], ["43", 2798, 2785], ["29", 2798, 2785], ["17", 2798.5, 2785.5], ["15", 2798.5, 2785.5]];
const PIE: [number, number, string][] = [[0, 97.2, "#332288"], [97.2, 165.3, "#44aa99"], [165.3, 220, "#88ccee"], [220, 257, "#117733"], [257, 275.8, "#999933"], [275.8, 294.2, "#ddcc77"], [294.2, 310.9, "#661100"], [310.9, 320.9, "#cc6677"], [320.9, 328.6, "#882255"], [328.6, 360, "#a5a5a5"]];
const PIE_LABELS: [string, number, number, number][] = [["Mountain-200", 1220.5, 1308, 2676], ["Road-150", 1220.5, 1281.5, 2813.5], ["Road-250", 1058, 1119, 2846.5], ["Touring-1000", 968.5, 1053.5, 2799.5], ["Road-350-W", 960, 1038, 2751.5], ["Road-550-W", 963, 1042, 2717.5], ["Mountain-100", 966.5, 1055, 2688.5], ["Road-750", 1008, 1070, 2668.5], ["Road-650", 1020.5, 1082, 2648.5]];
const LEGEND: [string, string, number][] = [["Mountain-200", "#332288", 82], ["Road-150", "#44aa99", 57], ["Road-250", "#88ccee", 57], ["Touring-1000", "#117733", 80], ["Road-350-W", "#999933", 74], ["Road-550-W", "#ddcc77", 74], ["Mountain-100", "#661100", 82]];

function Dashboard() {
  return (
    <section>
      <div className="absolute left-[14px] top-[2195px] flex h-[675px] w-[1578px] bg-[#f0f0f0] pt-[5px]">
        <div className="w-[786px]">
          <div className="flex h-[386px] gap-[9px]">
            <div className="flex w-[190px] flex-col gap-[10px] text-[12px] tracking-[-0.2px]">
              <div className="h-[217px] rounded-r-[3px] border border-l-0 border-[#d6d6d6] bg-white">
                <p className="flex h-[46px] items-center gap-[5px] pl-[5px] text-[12.7px] font-bold tracking-[-0.4px]"><Search className="size-[13px] text-[#999]" />CalendarYear</p>
                {["2005", "2006", "2007", "2008"].map((y) => <p key={y} className="flex h-[30.1px] items-center justify-end border-b border-[#d9d9d9] pr-[23px]">{y}</p>)}
              </div>
              <div className="h-[149px] rounded-tr-[3px] border border-b-0 border-l-0 border-[#d6d6d6] bg-white">
                <p className="flex h-[46px] items-center gap-[5px] pl-[5px] text-[12.7px] font-bold tracking-[-0.4px]"><Search className="size-[13px] text-[#999]" />Region</p>
                {["North America", "Europe", "Pacific"].map((y) => <p key={y} className="flex h-[30.1px] items-center border-b border-[#d9d9d9] pl-[6px]">{y}</p>)}
              </div>
            </div>
            <div className="w-[587px] border border-[#d6d6d6] bg-white">
              <Plot box={[214, 2201, 585, 384]}>
                <Txt x={223} y={2221} w={328} s={15} b={700} a="start" f="#808080">sum(Quantity) by EnglishProductCategoryName</Txt>
                <BarPlot gx={[278, 788]} axis={287} grid={[[2242, "40k", 2248], [2301.5, "30k"], [2360.5, "20k"], [2419.5, "10k"], [2478.5, "0"]]} bars={[[299.5, 359, 2265], [384.5, 444.5, 2389], [470, 530, 2425]]} cats={["Accessories", "Bikes", "Clothing"]} catY={2491} tilt yt={[233, 2361, 82, "sum([Quantity])"]} xt={[537, 2566, 161, "EnglishProductCategoryName"]} />
              </Plot>
            </div>
          </div>
          <div className="ml-[-14px] mt-[11px] h-[271px] w-[800px] border border-l-0 border-[#d6d6d6] bg-white">
            <Plot box={[0, 2598, 799, 269]}>
              <path d="M78 2695H788M78 2799.500H788M86.500 2613V2799" stroke="#ccc" />
              {HIST.map(([t, y, ly], i) => (
                <g key={i}>
                  <rect x={87 + i * 41.42} y={y} width={41.4} height={2799.5 - y} fill={BLUE} stroke="#c3ccd6" strokeWidth={0.9} />
                  <Txt x={107.5 + i * 41.42} y={ly} s={12} b={i > 1 && i < 5 ? 600 : 400} f={i > 1 && i < 5 ? "#fff" : "#656565"} w={t.length > 3 ? 30.5 : undefined}>{t}</Txt>
                </g>
              ))}
              <path d="M78 2799.500H788" stroke="#bbb" strokeWidth="1.500" />
              {[40, 50, 60, 70, 80, 90, 100].map((t, i) => <g key={t}><path d={`M${116.5 + i * 97.15} 2800v8`} stroke="#ccc" /><Txt x={116.5 + i * 97.15} y={2822}>{t}</Txt></g>)}
              <Txt x={74} y={2695} a="end">5k</Txt><Txt x={74} y={2799} a="end">0</Txt>
              <Txt x={36} y={2699.5} r={-90} w={61} s={12} f="#404040">Frequency</Txt>
              <Txt x={438} y={2849} w={20} s={12} f="#404040">Age</Txt>
            </Plot>
          </div>
        </div>
        <div className="ml-[9px] flex flex-1 flex-col gap-[11px]">
          <div className="h-[386px] border border-r-0 border-[#d6d6d6] bg-white">
            <Plot box={[810, 2201, 782, 384]}>
              <BarPlot gx={[873, 1520]} axis={882.5} grid={[[2206.5, "40k", 2213], [2287.5, "30k"], [2367.5, "20k"], [2447.5, "10k"], [2527.5, "0"]]} bars={[[897, 963, 2269], [991, 1057, 2331.5], [1085, 1150, 2506], [1178, 1244, 2520]]} cats={["2008", "2007", "2006", "2005"]} catY={2544} refLine={{ y: 2407.5, x: 1525.5, w: 58 }} yt={[829, 2367, 77, "Sum(Quantity)"]} xt={[1191, 2566, 70, "CalendarYear"]} />
              <path d="M1238 2563.500h9l-4.500 6.500z" fill="#737373" />
            </Plot>
          </div>
          <div className="h-[271px] border border-r-0 border-[#d6d6d6] bg-white">
            <Plot box={[810, 2598, 782, 269]}>
              <Txt x={1142} y={2615.5} s={13} w={35} f="#8c8c8c">Model</Txt>
              {PIE.map(([a, b, c]) => <path key={c} d={slice(1142, 2746, 92.5, a, b)} fill={c} />)}
              <Txt x={1194.5} y={2699} w={31} f="#fff" b={600}>27.0%</Txt><Txt x={1195} y={2791} w={31} f="#fff" b={600}>18.9%</Txt>
              <Txt x={1126} y={2818} w={31} f="#404040">15.2%</Txt><Txt x={1121.5} y={2672} w={25} f="#fff" b={500}>8.8%</Txt>
              <path d="M1084 2652l3.500 17M1072 2673l4 5" stroke="#404040" />
              {PIE_LABELS.map(([t, a, b, y]) => <Txt key={t} x={a} y={y} w={b - a} s={13} a="start" f="#505050">{t}</Txt>)}
              <Txt x={1472.5} y={2646.5} w={41} s={14.5} a="start" f="#505050">Model</Txt>
              {LEGEND.map(([t, c, w], i) => <g key={t}><rect x={1472} y={2667.5 + i * 21} width={12} height={12} fill={c} /><Txt x={1492} y={2673.5 + i * 21} s={12.5} w={w} a="start">{t}</Txt></g>)}
              <path d="M1501.500 2834h12l-6 8z" fill="#737373" /><path d="M1533.500 2841.500h12l-6-8z" fill="#d0d0d0" />
            </Plot>
          </div>
        </div>
      </div>
      <div className="absolute left-0 top-[2572px] w-[217px] border-t border-[#ccc] bg-white"><div className="h-[25px] pl-3"><ObjectTools /></div></div>
    </section>
  );
}

/* ---------- 5: range selection ---------- */

function RangeSelect() {
  const bars: [number, number, number, boolean][] = [[25, 54, 3026, false], [54, 95.5, 3054.5, true], [95.5, 137, 3059, true], [137, 178.5, 3101, true], [178.5, 220, 3118, true], [220, 261, 3131.5, false], [261, 302, 3136.5, false]];
  const labels: [string, number, number][] = [[".07k", 37.5, 3014], ["3.79k", 74.5, 3042], ["3.56k", 116, 3047], ["1.71k", 157.5, 3089], ["933", 198.5, 3106], ["350", 240, 3119], ["105", 281.5, 3125], ["43", 322.5, 3126], ["29", 364, 3126], ["17", 405, 3127], ["15", 446.5, 3127]];
  const ticks: [number, string][] = [[85.5, "70"], [182.5, "80"], [279.5, "90"], [377, "100"]];
  const handles: [number, string][] = [[81, "66.75"], [193, "83.75"]];
  return (
    <section className="absolute left-[25px] top-[2880px] w-[449px]">
      <div className="flex h-[41px] items-center justify-end gap-2 border-b border-[#d9d9d9] pr-[7px]">
        <div className="flex h-7 w-11 items-center justify-center rounded-[3px] bg-[#595959]"><LassoIcon /></div>
        <Dashed kind="clear" className="ml-[14px] mr-[13px]" />
        <i className="h-7 w-px bg-[#ccc]" />
        <div className="flex h-7 w-11 items-center justify-center rounded-[3px] bg-[#dc423f]"><X className="size-4 text-white" strokeWidth={3.6} /></div>
        <div className="flex h-7 w-11 items-center justify-center rounded-[3px] bg-[#009845]"><Check className="size-4 text-white" strokeWidth={4} /></div>
      </div>
      <Plot box={[25, 2921, 449, 270]}>
        <path d="M25 3027.500H467" stroke="#ccc" />
        {bars.map(([a, b, y, on]) => <rect key={a} x={a} y={y} width={b - a} height={3138 - y} fill={on ? BLUE : "#c7d6e6"} stroke={on ? "#262626" : "none"} strokeWidth={1.5} />)}
        <path d="M25 3138.500H467" stroke="#999" />
        <rect x={82} y={3139} width={110} height={39} fill="#e0f0d8" />
        {ticks.map(([x, t]) => <g key={t}><path d={`M${x} 3139v8`} stroke="#bbb" /><Txt x={x} y={3163.5}>{t}</Txt></g>)}
        {labels.map(([t, x, y]) => <Txt key={t} x={x} y={y} s={12} w={t.length > 4 ? 30 : t.length > 3 ? 23 : undefined}>{t}</Txt>)}
        <path d="M81.500 2957V3178M192.500 2957V3178" stroke="#404040" />
        {handles.map(([x, t]) => <g key={t}><rect x={x - 33.5} y={2927.5} width={67} height={29} rx={3} fill="#fff" stroke="#595959" /><Txt x={x} y={2943} s={13.5} w={36}>{t}</Txt></g>)}
        <path d="M107.500 3187l1.500-3 1.500 3" stroke="#555" fill="none" />
      </Plot>
    </section>
  );
}

/* ---------- 6: associations, calculated field, buckets ---------- */

function Tok({ children, k }: Kids & { k: "f" | "v" | "s" }) {
  const c = { f: "font-bold text-[#5f86d9]", v: "bg-[#f2f2f2] font-bold text-[#cc9966]", s: "text-[#3f8f3f]" };
  return <span className={c[k]}>{children}</span>;
}

function BucketOutline() {
  return (
    <svg className="absolute -left-[7px] -top-2" width={483} height={275} viewBox="1027 3369 483 275">
      <path d="M1508 3369V3644M1029 3369V3644" stroke={RED} strokeWidth={4} />
      <path d="M1027 3371.200H1510M1027 3641.700H1510" stroke={RED} strokeWidth={4.5} />
    </svg>
  );
}

const COLUMNS: [string, string][] = [["FirstName", "pr-[5px]"], ["MiddleName", "pr-[6px]"], ["LastName", "pr-[2px]"]];

function Modelling() {
  return (
    <section>
      <svg className="absolute left-4 top-[3253px]" width={493} height={238} viewBox="16 3253 493 238">
        <defs><linearGradient id="bubble" x2="0" y2="1"><stop offset="0" stopColor="#fff" /><stop offset="1" stopColor="#f0f0f0" /></linearGradient></defs>
        <path d="M16 3254H351V3302H509V3490H16z" fill="#f0f0f0" />
        <g fill="#737373">
          <circle cx="368" cy="3377" r="92" /><circle cx="79.500" cy="3403" r="65" />
          <path d="M118 3350C150 3370 178 3367 190 3367.500 225 3367 262 3360 300 3318V3438C280 3418 250 3415 220 3415 190 3416 150 3422 126 3450z" />
        </g>
        <g fill="#555" opacity=".5"><circle cx="368" cy="3379.500" r="84" /><circle cx="79.500" cy="3405.500" r="58" /><circle cx="210.500" cy="3393" r="18.500" /></g>
        <g fill="url(#bubble)"><circle cx="368" cy="3377" r="84" /><circle cx="79.500" cy="3403" r="58" /><circle cx="210.500" cy="3390.500" r="18.500" /></g>
        <circle cx="210.500" cy="3390.500" r="7.500" fill="#b3b3b3" />
        <rect x="351" y="3253" width="158" height="49" fill="#fff" /><rect x="16" y="3300" width="3" height="190" fill="#f0f0f0" />
        <Txt x={79.5} y={3404.5} s={20} w={93}>Customer*</Txt><Txt x={368} y={3377} s={20} w={90}>vDMPrep*</Txt>
      </svg>
      <div className="absolute left-4 top-[3491px] h-[98px] w-[483px] bg-[#f0f0f0]">
        <div className="ml-[3px] flex h-[50px] items-center bg-white pl-[27px] text-[12.7px] font-bold text-[#8c8c8c] shadow-[inset_0_5px_white,inset_0_6px_#bbb,inset_0_-1px_#bbb]">
          <span className="w-[158px] tracking-[-0.35px]">Customer.CustomerKey</span>
          <span className="mr-4 mt-1 flex h-7 w-[126px] items-center gap-3 rounded-full border border-[#b3b3b3] bg-gradient-to-b from-white to-[#eee] pl-[10px] tracking-[-0.4px] text-[#505050]"><i className="size-3 rounded-full bg-[#009845]" />CustomerKey</span>
          <span className="tracking-[-0.5px]">vDMPrep.CustomerKey</span>
        </div>
        <div className="ml-[26px] h-[43px] w-[217px] border-t border-[#ccc] bg-white pl-[12px]"><ObjectTools /></div>
      </div>

      <div className="absolute left-[667px] top-[3256px] flex h-7 gap-[5px] text-[12.7px] font-bold tracking-[-0.35px]">
        <div className={`${btn} w-[81px] rounded-[3px]`}>Unpivot</div>
        <div className={`${btn} w-[129px] gap-[23px] rounded-[3px] pl-[12px]`}>Add field<Caret /></div>
        <div className={`${btn} w-[174px] rounded-[3px]`}>Select data from source</div>
      </div>

      <div className="absolute left-[656px] top-[3319px] w-[293px] text-[12.5px] tracking-[-0.2px]">
        <div className="flex h-9 items-center bg-[#4d4d4d] pl-[10px] font-bold text-[#f0f0f0]"><span className="text-[13px] tracking-[-0.3px]">Add calculated field</span><Help className="ml-auto mr-3 size-[17px] bg-[#ccc] text-[#4d4d4d]" /><ExpandIcon /><X className="ml-3 size-4" strokeWidth={2.6} /></div>
        <div className="px-[10px] pt-[8px]">
          <p className="leading-[18px]">Name</p>
          <div className="flex h-[26px] w-[278px] items-center rounded-[3px] border border-[#b3b3b3] pl-[7px]">FullName</div>
          <p className="mb-1 mt-8 leading-[18px]">Expression</p>
          <pre className="h-[101px] w-[278px] rounded-[3px] border border-[#b3b3b3] pl-[5px] pt-[6px] font-['DejaVu_Sans_Mono',monospace] text-[11.8px] leading-[17px] tracking-[0.03px] text-[#404040]">
            <Tok k="f">If</Tok>(<br />
            <Tok k="f">IsNull</Tok>(<Tok k="v">MiddleName</Tok>),<br />
            <Tok k="v">FirstName</Tok>&amp;<Tok k="s">' '</Tok>&amp;<Tok k="v">LastName</Tok>,<br />
            <Tok k="v">FirstName</Tok>&amp;<Tok k="s">' '</Tok>&amp;<Tok k="v">MiddleName</Tok>&amp;<Tok k="s">' '</Tok>&amp;<Tok k="v">LastName</Tok><br />)
          </pre>
        </div>
      </div>

      <div className="absolute left-[1467px] top-[3264px] flex h-[36px] w-[122px] items-center justify-center border-l border-[#808080] bg-[#f0f0f0] text-[12.7px] font-bold tracking-[-0.45px]">Hide in Analysis</div>

      <div className="absolute left-[958px] top-[3316px] grid h-[60px] w-[636px] grid-cols-[202px_202px_232px] border-b border-t border-b-[#bbb] border-t-[#bbb] text-[12.7px] font-bold tracking-[-0.4px]">
        {COLUMNS.map(([t, pad]) => (
          <div key={t} className="border-r border-[#ddd]">
            <div className={`flex h-[30px] items-center justify-end gap-[9px] border-b border-[#ccc] bg-[#f0f0f0] ${pad}`}>
              <svg viewBox="0 0 14 12" className="h-3 w-[14px]" fill="none" stroke="#808080" strokeWidth="1.500"><path d="M1 6c3-6 9-6 12 0-3 6-9 6-12 0z" /><circle cx="7" cy="6" r="2" fill="#808080" /></svg>
              <svg viewBox="0 0 14 14" className="size-[14px]" fill="none" stroke="#808080" strokeWidth="1.600"><path d="M1 4V1h3M10 1h3v3M13 10v3h-3M4 13H1v-3" /></svg>
              <Menu className="size-[19px]" strokeWidth={2.6} />
            </div>
            <div className="flex h-7 items-center pl-2">{t}</div>
          </div>
        ))}
      </div>

      <div className="absolute left-[1034px] top-[3377px] h-[267px] w-[466px] bg-white">
        <BucketOutline />
        <div className="relative flex h-[25px] items-center bg-[#fafafa] pt-0.5 text-[8.5px] font-bold text-[#999]">
          <div className="flex h-full w-[73px] items-center justify-center border-t border-[#ef960f] bg-white text-[#505050]">Bucket</div>
          <div className="flex h-full w-[74px] items-center justify-center border-r border-[#e0e0e0]">Replace</div>
          <div className="flex flex-1 items-center pl-[18px]">Set nulls</div>
          <Help className="mr-[10px] size-3 bg-[#666] text-white" />
        </div>
        <Plot box={[1034, 3402, 466, 242]} className="relative">
          <Txt x={1045} y={3417} s={9.5} w={218} a="start">Group values into buckets to create ranges of values</Txt>
          <rect x={1229.5} y={3428.5} width={36} height={17} rx={2} fill="#fff" stroke="#b3b3b3" /><Txt x={1238} y={3437} s={9.5}>3</Txt><Txt x={1270} y={3437} s={9.5} w={34} a="start">Buckets</Txt>
          <path d="M1100 3487.500H1395" stroke="#ccc" />
          <Txt x={1098} y={3453} s={8.5} a="end">30k</Txt><Txt x={1098} y={3488} s={8.5} a="end">15k</Txt><Txt x={1098} y={3526} s={8.5} a="end">0</Txt>
          <path d="M1112 3481h24v45h-24zM1145 3451h23v75h-23zM1177 3494h22v32h-22z" fill={BLUE} />
          <Txt x={1124.5} y={3467} r={-90} s={8.5} w={20}>17.58k</Txt><Txt x={1156} y={3464} r={-90} s={8.5} w={20} f="#fff">29.89k</Txt><Txt x={1188.5} y={3480} r={-90} s={8.5} w={20}>12.82k</Txt>
          <Txt x={1068} y={3487} r={-90} s={9} w={52} f="#404040">Count of bucket</Txt>
          <Txt x={1126} y={3533} r={-40} s={8.5} a="end">Genç</Txt><Txt x={1159} y={3533} r={-40} s={8.5} a="end">Orta Y...</Txt><Txt x={1192} y={3533} r={-40} s={8.5} a="end">İleri Yaş</Txt>
          <Txt x={1045} y={3561} s={9.5} w={34} a="start">Buckets</Txt><Txt x={1136} y={3575} s={8}>40</Txt><Txt x={1236} y={3575} s={8}>60</Txt>
          <defs><linearGradient id="fade"><stop offset="0" stopColor="#63acd5" stopOpacity="0" /><stop offset=".06" stopColor="#63acd5" /><stop offset=".82" stopColor="#63acd5" /><stop offset="1" stopColor="#63acd5" stopOpacity="0" /></linearGradient></defs>
          <rect x={1060} y={3582} width={410} height={17} fill="url(#fade)" /><rect x={1138} y={3582} width={100} height={17} fill="#3d89b4" />
          <path d="M1137.500 3582v17M1238 3582v17" stroke="#fff" /><g fill="#e6e6e6" stroke="#888"><circle cx="1137.500" cy="3590.500" r="6" /><circle cx="1238" cy="3590.500" r="6" /></g>
          <rect x={1340.5} y={3615} width={49} height={16.5} rx={2} fill="#fff" stroke="#bbb" /><Txt x={1365} y={3623} s={8.5} w={24} b={600}>Reset</Txt>
          <rect x={1397} y={3615} width={90} height={16.5} rx={2} fill="#fff" stroke="#bbb" /><Txt x={1442} y={3623} s={8.5} w={65} b={600}>Create buckets</Txt>
        </Plot>
      </div>
      <div className="absolute left-[1395px] top-[3395px] border-l border-t border-[#ddd] bg-white">
        <Plot box={[1396, 3396, 165, 201]}>
          <path d="M1440 3398.500H1558M1432 3480.500H1558" stroke="#ccc" />
          {([["20M", 3403], ["15M", 3440], ["10M", 3481], ["5M", 3522], ["0", 3563]] as [string, number][]).map(([t, y]) => <Txt key={t} x={1431} y={y} s={8} w={t.length > 2 ? 13 : undefined} a="end">{t}</Txt>)}
          <path d="M1441.500 3489h29.500v74h-29.500zM1483 3437h29v126h-29zM1525 3522h28.500v41h-28.500z" fill={BLUE} />
          <Txt x={1456} y={3573} s={7.5} w={14}>Genç</Txt><Txt x={1498} y={3573} s={7.5} w={23}>Orta Yaş</Txt><Txt x={1539} y={3573} s={7.5} w={21}>İleri Yaş</Txt>
          <Txt x={1541} y={3586} s={8} w={26} f="#262626">YaşGrubu</Txt><Txt x={1406} y={3481} r={-90} s={9} w={43} f="#262626">Sum(Amount)</Txt>
        </Plot>
      </div>
    </section>
  );
}

/* ---------- 7: custom visuals ---------- */

const MODELS = ["Road-150", "Mountain-100", "Road-650", "Road-550-W", "Road-250", "Mountain-200", "Road Bottle Cage", "Touring-2000", "Sport-100", "Mountain Bottle Cage", "Water Bottle", "HL Road Tire", "Road Tire Tube", "All-Purpose Bike Stand", "Long-Sleeve Logo Jersey", "Road-350-W", "HL Mountain Tire", "Mountain Tire Tube", "Touring-3000", "Touring Tire", "Touring Tire Tube"];
const PIVOT: [string, string[]][] = [["", ["-", "-", "-", "2"]], ["", ["-", "-", "2", "-"]], ["", ["-", "-", "-", "3"]], ["", ["-", "1", "-", "5"]], ["Aaron Perry", ["-", "-", "2", "-"]], ["Aaron Powell", ["-", "-", "1", "-"]], ["Aaron Roberts", ["-", "-", "2", "-"]], ["Aaron Russell", ["-", "-", "-", "2"]], ["Aaron Shan", ["-", "-", "2", "-"]], ["Aaron Simmons", ["-", "-", "2", "-"]], ["Aaron A Allen", ["-", "-", "2", "-"]], ["Aaron A Hayes", ["-", "-", "-", "2"]], ["Aaron A Zhang", ["-", "-", "2", "-"]], ["Aaron B Adams", ["-", "-", "2", "-"]], ["Aaron C Campbell", ["-", "-", "-", "2"]], ["Aaron C Diaz", ["-", "-", "2", "-"]], ["Aaron C Scott", ["-", "-", "-", "4"]], ["Aaron C Yang", ["-", "-", "-", "2"]]];
const TILE_LABELS: [string, number, number][] = [["48", 360, 3801], ["54", 453, 3801], ["55", 537, 3801], ["45", 617, 3801], ["52", 696, 3801], ["51", 776, 3801], ["47", 360, 4036.5], ["50", 360, 4133], ["61", 453, 4061], ["59", 453, 4142.5], ["63", 533, 4055], ["58", 533, 4140], ["65", 603, 4040.5]];
const WORDS: [string, number, number, number, number, number, string][] = [
  ["Touring-2000", 1022, 4192, 131, 20, -45, "#fee5a0"],
  ["LL Road Tire", 1038.5, 4222, 160, 27, -45, "#fdcb6b"],
  ["Road-750", 1096, 4214.5, 146, 33, -45, "#fe9b31"],
  ["Road Tire Tube", 1110, 4260, 298, 44, -45, "#c14702"],
  ["Patch kit", 1267.5, 4292, 217, 53, 45, "#662506"],
  ["Touring-1000", 1116, 4330, 194, 31, -45, "#feac40"],
  ["Road-250", 1158, 4350, 173, 38, -45, "#ee7519"],
  ["Classic Vest", 1176.5, 4384.5, 122, 21, -45, "#fee091"],
  ["Bike Wash", 1277.5, 4365, 126, 26, 45, "#fecb62"],
  ["Road-650", 1346, 4195, 119, 26, 45, "#fecd66"],
  ["Road-550-W", 1345, 4246, 194, 33, 45, "#fe9a2f"],
  ["Road-150", 1318.5, 4277.5, 156, 34, 45, "#fb8f28"],
  ["Cycling Cap", 1436.5, 4316, 219, 42, -45, "#d35606"],
  ["ML Road Tire", 1460, 4210, 164, 27, -45, "#fdcb6b"],
  ["Road-350-W", 1461.5, 4358, 161, 27, -45, "#fec65a"],
];

function Visuals() {
  const panel = "rounded-[3px] border border-[#d6d6d6] bg-white";
  return (
    <section>
      <Tabs className="absolute left-[22px] top-[3664px] h-[41px] w-[833px] pl-[6px] pr-[9px]">
        <BookmarkButton />
        <div className={`${btn} h-7 w-[93px] gap-[21px] rounded-l-[3px]`}><PencilIcon />Edit</div>
        <div className="flex h-7 w-[150px] items-center justify-center gap-[9px] border border-[#3f8ab3] bg-[#595959] text-[12.5px] tracking-[-0.3px] text-white">My new sheet<SheetIcon /><Caret className="border-t-white" /></div>
      </Tabs>
      <div className="absolute left-[22px] top-[3705px] h-[5px] w-[833px] border-b-2 border-t border-b-[#8c8c8c] border-t-[#ccc] bg-[#f7f7f7]"><i className="absolute -top-0.5 left-[745px] size-[9px] rotate-45 border-l border-t border-[#888] bg-white" /></div>
      <div className="absolute left-[659px] top-[3716px] flex h-7 w-[196px] justify-between text-[12.5px] font-bold tracking-[-0.15px]">
        <div className={`${btn} w-[140px] rounded-[3px]`}>Create new sheet</div>
        <div className="grid w-[43px] grid-cols-2 content-center justify-center gap-0.5 rounded-l-[3px] bg-[#595959] px-3"><i className="h-[6px] bg-white" /><i className="h-[6px] bg-white" /><i className="h-[6px] bg-white" /><i className="h-[6px] bg-white" /></div>
      </div>

      <div className="absolute left-[6px] top-[3773px] flex h-[680px] w-[1588px] gap-[10px] bg-[#f0f0f0] pl-[5px] pr-1 pt-[6px]">
        <div className={`h-[668px] w-[322px] overflow-hidden ${panel}`}>
          <p className="flex h-[47px] items-center gap-[5px] pl-1 text-[12.7px] font-bold"><Search className="size-[13px] text-[#999]" />Model</p>
          <div className="flex text-[12px] tracking-[-0.1px]">
            <div className="flex-1">{MODELS.map((m) => <p key={m} className="flex h-[30px] items-center border-b border-[#d6d6d6] pl-[6px]">{m}</p>)}</div>
            <div className="h-[583px] w-2 rounded-full bg-[#b3b3b3]" />
          </div>
        </div>
        <div className="flex w-[520px] flex-col gap-[9px]">
          <div className={`h-[442px] ${panel}`}>
            <Plot box={[343, 3780, 518, 440]}>
              <rect x={356} y={3789} width={492} height={423} fill={BLUE} />
              <path fill="none" stroke="#b8cbdd" d="M448.500 3789V4212M532.500 3789V3900M612.500 3789V3900M691.500 3789V3900M771 3789V3900M528.500 3950V4212M598.500 3950V4212M356 4025.500H448M356 4120.500H448M448.500 4048.500H528M448.500 4131H528M528.500 4043H598M528.500 4127H598M598.500 4028.500H848M669 4012V4028M730.500 4012V4028M789.500 4012V4028M655.500 4028V4212M598.500 4098.500H655M598.500 4156H655M702.500 4028V4212M655.500 4092.500H702M655.500 4152.500H702M753 4028V4212M702.500 4083H848M702.500 4129H753M702.500 4173.500H753M801 4028V4121M753 4121H848M787.500 4121V4212M753 4169.500H787M821.500 4121V4158M787.500 4158.500H848M806.500 4158V4212M827.500 4158V4180M787.500 4185H806M806.500 4180.500H848M829.500 4180V4212M806.500 4199H829M829.500 4192H848M829.500 4201H848M836 4201V4212M842 4192V4212M836 4207H848" />
              {TILE_LABELS.map(([t, x, y]) => <Txt key={t} x={x} y={y} s={11.5} a="start" f="#e3ebf2" b={500}>{t}</Txt>)}
            </Plot>
          </div>
          <div className="flex gap-[9px]">
            <div className={`w-[323px] ${panel}`}>
              <Plot box={[343, 4231, 320, 215]}>
                <Txt x={503} y={4249.5} w={76} s={12.5} f="#808080">MaritalStatus</Txt>
                <path d={slice(503, 4352.5, 71, 0, 198.4)} fill={BLUE} /><path d={slice(503, 4352.5, 71, 198.4, 360)} fill="#cc6677" />
                <Txt x={454.5} y={4344} w={31} f="#fff" b={500}>44.9%</Txt><Txt x={551} y={4359} w={31} f="#fff" b={500}>55.1%</Txt>
                <Txt x={417} y={4338} s={13}>S</Txt><Txt x={589} y={4364} s={13}>M</Txt>
              </Plot>
            </div>
            <div className="flex flex-1 flex-col gap-[9px]">
              <div className={`flex-1 ${panel}`}><Plot box={[675, 4232, 186, 100]}><Txt x={768} y={4261.5} w={76} s={12.5}>Sum(Amount)</Txt><Txt x={768} y={4290.5} w={105} s={29} f={BLUE}>29.36M</Txt></Plot></div>
              <div className={`flex-1 ${panel}`}><Plot box={[675, 4345, 186, 100]}><Txt x={768} y={4368} w={80} s={12.5}>Sum(Quantity)</Txt><Txt x={768} y={4403.5} w={104} s={40} f={BLUE}>60.4k</Txt></Plot></div>
            </div>
          </div>
        </div>
        <div className={`h-[668px] w-[718px] overflow-hidden text-[12.2px] ${panel}`}>
          <div className="flex h-[101px] border-b border-[#a6a6a6]">
            <div className="w-[273px] border-r border-[#a6a6a6] pl-[5px] pt-[15px]"><div className="flex h-7 w-[93px] items-center justify-center gap-2 rounded-[3px] border border-[#b3b3b3] text-[12.3px] font-semibold">FullName<Search className="size-[14px]" /></div></div>
            <div className="flex flex-1 flex-col">
              <div className="h-[51px] border-b border-[#ddd] pl-[5px] pt-[15px]"><div className="flex h-7 w-[117px] items-center justify-center gap-2 rounded-[3px] border border-[#b3b3b3] text-[12.3px] font-semibold tracking-[-0.1px]">CalendarYear<Search className="size-[14px]" /></div></div>
              <div className="grid flex-1 grid-cols-4">{["2005", "2006", "2007", "2008"].map((y) => <div key={y} className="flex items-center justify-center border-r border-[#ddd] text-[11.8px]">{y}</div>)}</div>
            </div>
          </div>
          {PIVOT.map(([n, v], i) => (
            <div key={i} className="flex h-[31px]">
              <div className="flex w-[273px] items-center border-b border-r border-b-[#ddd] border-r-[#a6a6a6] pl-1 text-[12.4px] tracking-[-0.05px]">{n}</div>
              <div className="grid flex-1 grid-cols-4">
                {v.map((c, j) => c === "-"
                  ? <div key={j} className="flex items-center border-b border-r border-[#ddd] bg-[#f0f0f0] pl-1">-</div>
                  : <div key={j} className="flex items-center justify-end border-b border-r border-[#ddd] pr-[9px]">{c}</div>)}
              </div>
            </div>
          ))}
        </div>
      </div>

      <div className="absolute left-[315px] top-[3848px] h-[164px] w-[835px] bg-white">
        <div className="absolute left-0 top-[3px] h-[155px] w-[831px] border-[5px] border-[#22b14c] bg-white">
          <svg className="absolute -left-[5px] -top-[5px]" width={831} height={155} viewBox="315 3851 831 155">
            <path d="M323 3858.500H530M578 3891.500H905M592 3988.500H940M529 3992V4001M734 3989V4001M940 3989V4001" stroke="#d6d6d6" fill="none" />
            <rect x={789} y={3851} width={115} height={37} fill="#22b14c" /><rect x={794} y={3856} width={104} height={27} fill="#e6e6e6" />
            <Note x0={799} x1={885.5} y={3877} f="#22b14c">SimpleKPI</Note>
            <Note x0={352} x1={504} y={3910.5} s={17.5} f="#111">sonraki bir demoda</Note>
            <Note x0={352} x1={543} y={3933} s={17.5} f="#111">measure ile placeholder</Note>
            <Note x0={352} x1={549} y={3956} s={17.5} f="#111">yapıp master itemı oraya</Note>
            <Note x0={352} x1={455} y={3979} s={17.5} f="#111">sürükleyelim</Note>
            <Txt x={699.5} y={3909.5} w={136} s={18.5} b={700} f="#ff3b14">Sum(Quantity)</Txt>
            <Txt x={929.5} y={3909.5} w={128} s={18.5} b={700} f="#ffcc00">Sum(Amount)</Txt>
            <Txt x={728} y={3955} w={104} s={64} b={300} f="#46c646">60k</Txt>
            <Txt x={948} y={3955} w={122} s={64} b={300} f="#7db8da">29M</Txt>
          </svg>
          <Database className="absolute left-[297px] top-[67px] h-[64px] w-[55px] text-[#46c646]" />
          <DollarSign className="absolute left-[519px] top-[65px] h-[68px] w-[50px] text-[#7db8da]" strokeWidth={4} preserveAspectRatio="none" />
        </div>
      </div>
    </section>
  );
}

function WordCloud() {
  return (
    <div className="absolute left-[949px] top-[4129px] h-[323px] w-[619px]">
      <svg className="absolute inset-0" width={619} height={323} viewBox="949 4129 619 323">
        <rect x={951} y={4133} width={614} height={317} fill="#fff" />
        {WORDS.map(([t, x, y, w, s, r, c]) => <Txt key={t} x={x} y={y} w={w} s={s} r={r} f={c}>{t}</Txt>)}
        <Frame b={[949, 4131, 1568, 4452]} t={5} />
      </svg>
      <div className="absolute right-0 top-0 h-[46px] w-[177px] border-4 border-[#ed1c24] bg-white pb-px pt-[5px]">
        <div className="flex h-full items-center border-l-2 border-[#ef960f] bg-[#fafafa] pl-[10px] pt-0.5 text-[12px] tracking-[-0.1px]">Qlik Visualization bundle</div>
      </div>
    </div>
  );
}

/* ---------- annotation layer ---------- */

const MARKS: [number, number, number, number][] = [
  [358, 18, 473, 60], [960, 54, 1211, 142], [961, 58, 1103, 99], [40, 454, 71, 565], [268, 680, 359, 711], [684, 186, 721, 227], [856, 186, 1009, 235], [982, 476, 1017, 589], [1152, 716, 1343, 755],
  [126, 872, 223, 923], [534, 960, 783, 1007], [16, 1112, 55, 1209], [262, 1304, 345, 1329], [1358, 1044, 1471, 1071],
  [556, 1467, 798, 1512], [830, 1415, 1081, 1476], [818, 1627, 971, 1664], [1178, 1615, 1415, 1686], [606, 1940, 687, 1979], [18, 1882, 155, 1917],
  [410, 2839, 459, 2861], [1461, 2631, 1527, 2657], [252, 2883, 305, 2918],
  [182, 3357, 247, 3432], [22, 3379, 135, 3432], [46, 3549, 87, 3590], [766, 3253, 883, 3288], [656, 3431, 949, 3578], [1064, 3313, 1136, 3352], [1278, 3315, 1313, 3350], [1512, 3317, 1549, 3352], [1458, 3263, 1600, 3302],
  [102, 3669, 185, 3706], [662, 3716, 799, 3744],
];

function Annotations() {
  const box = { c: "#3f48cc", t: 5, fill: "#fff" };
  return (
    <svg className="pointer-events-none absolute left-0 top-0" width={1594} height={4468} viewBox="0 0 1594 4468">
      {MARKS.map((b, i) => <Frame key={i} b={b} />)}
      <g fill="none" stroke={RED} strokeWidth={3}>
        <path d="M268 137L432 60 478 63 640 74 797 85 960 98M1101 98L1009 188" />
        <path d="M28 853.500H1585M16 3218.500H351M646 3218.500H1594M18 3652.500H1577" />
        <path d="M825 1119h37.500v-27.500l37.500 54-37.500 54V1172H825zM524 1422l33 46M984 1466L970 1550 958 1621M948 1624.500h30L1035 1623l40-1.500 55 0 18-1.500h29" />
        <path d="M708 1917.500L749 1857v30.500h40.500V1947H749v31z" />
        <path d="M776 3288l-41 36M750 3350l27 81M1139 3317l319-52M1310 3318l150-17M1454 3296l20 5 41 14" />
      </g>
      <path d="M2 2184.500H1592M12 2876.500H1594" stroke="#22b14c" strokeWidth={3} />
      <Frame {...box} b={[1253, 43, 1562, 94]} /><Note x0={1273} x1={1539} y={75} s={19.5}>1-Data&nbsp; Profiler ile Insight çıkar</Note>
      <Frame {...box} b={[993, 887, 1218, 938]} /><Note x0={1021} x1={1187} y={915}>2-Auto chartı kapat</Note>
      <Frame {...box} b={[1121, 1370, 1376, 1405]} /><Note x0={1129} x1={1347} y={1393}>3- Alternative Dimension</Note>
      <Frame {...box} b={[439, 1822, 668, 1861]} /><Note x0={453} x1={638} y={1848}>4-referans çizgisi ekle</Note>
      <Frame {...box} b={[595, 2924, 882, 2983]} /><Note x0={615} x1={847} y={2958}>5-Rapor, filtre, döner pasta</Note>
      <Frame {...box} b={[365, 3222, 640, 3283]} /><Note x0={381} x1={628} y={3260}>6-İlişki ve yeni kolon ekleme</Note>
      <Frame {...box} b={[1013, 3693, 1432, 3740]} /><Note x0={1037} x1={1400} y={3721}>7-Branch üzerinden Custom Visual ekleme</Note>
      <Note x0={1277} x1={1470} y={2570}>Alternative Dimension</Note>
      <Note x0={1322} x1={1392} y={2729}>Amount</Note>
      <Note x0={1283} x1={1380} y={3487} s={20} b={400}>Bucket Ekle</Note>
      <Note x0={1329} x1={1425} y={3807}>Pivot Table</Note>
      <rect x={992} y={4066} width={30} height={27} fill="#fafafa" /><rect x={1023} y={4066} width={3} height={27} fill="#ccc" />
      <circle cx={1008} cy={4077} r={8} fill="#737373" /><Txt x={1008} y={4077} s={13} b={700} f="#fff">?</Txt>
      <Frame c="#22b14c" t={5} b={[985, 4023, 1504, 4110]} /><Frame c="#22b14c" t={5} b={[987, 4061, 1178, 4108]} />
      <Note x0={1195} x1={1439} y={4051}>https://developer.qlik.com/</Note>
      <Note x0={1037} x1={1170} y={4091}>HelpTextPopup</Note>
      <Note x0={1187} x1={1489} y={4095}>Documents\Qlik\Sense\Extensions</Note>
    </svg>
  );
}

export default function App() {
  return (
    <div className="h-[4096px] w-full overflow-hidden bg-white">
      <main className="relative h-[4468px] w-[1594px] bg-white font-['Inter',sans-serif] text-[12.5px] leading-none text-[#595959] slashed-zero tabular-nums [zoom:0.9167]">
        <Profiler />
        <Suggestions />
        <Dashboard />
        <RangeSelect />
        <Modelling />
        <Visuals />
        <Annotations />
        <WordCloud />
      </main>
    </div>
  );
}
